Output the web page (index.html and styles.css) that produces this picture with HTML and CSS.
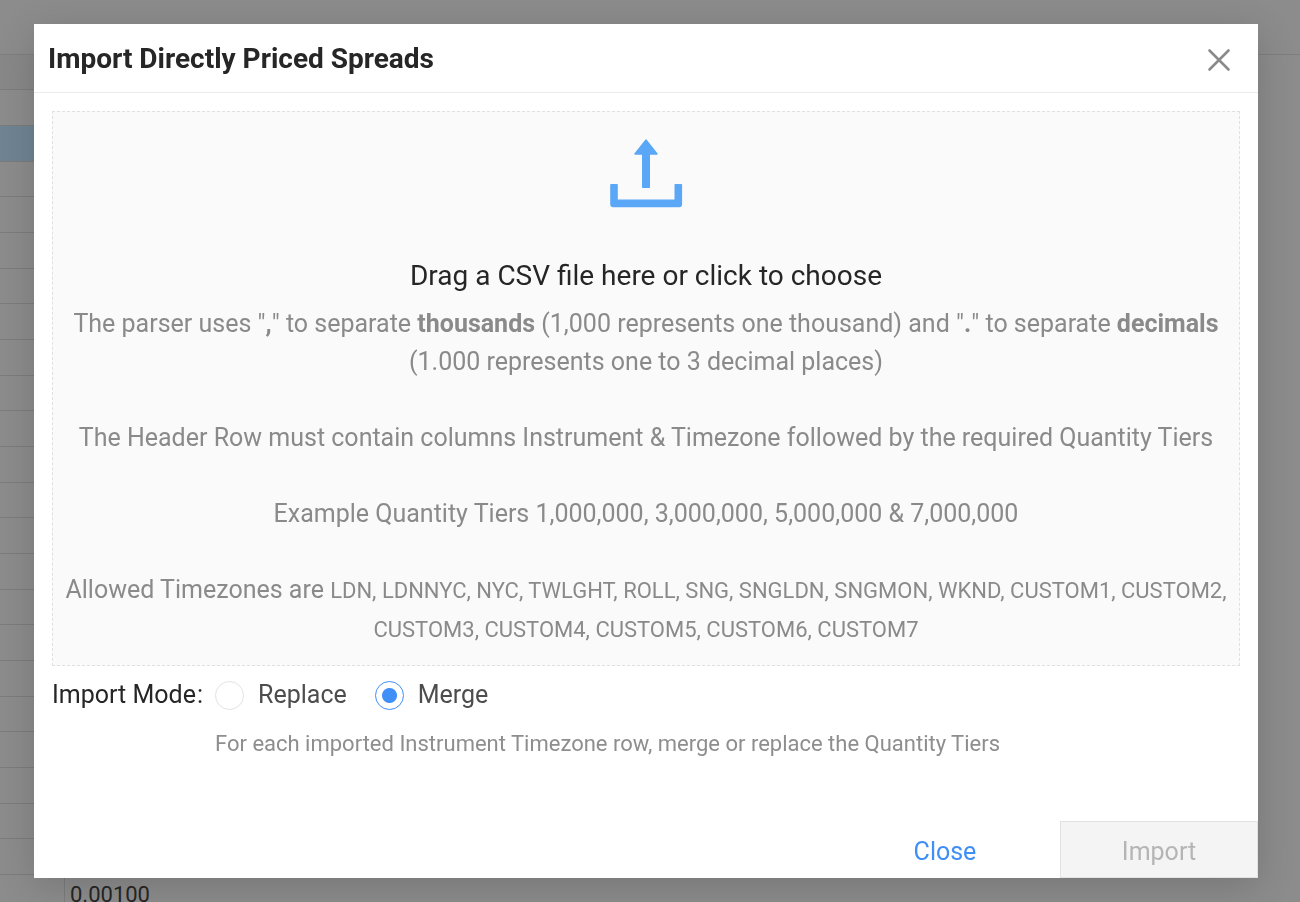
FILE: index.html
```html
<!DOCTYPE html>
<html lang="en">
<head>
    <meta charset="UTF-8">
    <meta name="viewport" content="width=device-width, initial-scale=1.0">
    <title>Import Directly Priced Spreads</title>
    <link rel="stylesheet" href="styles.css">
</head>
<body>
    <!-- Spreads grid behind the dialog -->
    <div class="page">
        <div class="toolbar"></div>
        <div class="rows">
            <div class="row head"></div>
            <div class="row"></div>
            <div class="row selected"></div>
            <div class="row"></div>
            <div class="row"></div>
            <div class="row"></div>
            <div class="row"></div>
            <div class="row"></div>
            <div class="row"></div>
            <div class="row"></div>
            <div class="row"></div>
            <div class="row"></div>
            <div class="row"></div>
            <div class="row"></div>
            <div class="row"></div>
            <div class="row"></div>
            <div class="row"></div>
            <div class="row"></div>
            <div class="row"></div>
            <div class="row"></div>
            <div class="row"></div>
            <div class="row"></div>
            <div class="row"></div>
            <div class="row"><span class="cell">0.00100</span></div>
        </div>
    </div>

    <div class="overlay">
        <div class="modal" role="dialog" aria-modal="true" aria-labelledby="modal-title">
            <div class="modal-header">
                <h1 id="modal-title">Import Directly Priced Spreads</h1>
                <button type="button" class="modal-x" aria-label="Close dialog">
                    <svg width="24" height="24" viewBox="0 0 24 24"><path d="M2.5 2.5L21.5 21.5M21.5 2.5L2.5 21.5" stroke="#8a8a8a" stroke-width="2.6" stroke-linecap="round"/></svg>
                </button>
            </div>

            <div class="modal-body">
                <button type="button" class="dropzone">
                    <svg class="upload-icon" width="74" height="70" viewBox="0 0 74 70" fill="#5ba7f7">
                        <path d="M36.3 .8a.9.9 0 0 1 1.4 0L48.6 14.4a.8.8 0 0 1-.6 1.3H41V48.2a.8.8 0 0 1-.8.8h-6.4a.8.8 0 0 1-.8-.8V15.7H26a.8.8 0 0 1-.6-1.3z"/>
                        <path d="M2 45h6a.8.8 0 0 1 .8.8V60.500H65.500V45.800a.8.8 0 0 1 .8-.8h6a.8.8 0 0 1 .8.8V65.200a3 3 0 0 1-3 3H4.200a3 3 0 0 1-3-3V45.800A.8.8 0 0 1 2 45z"/>
                    </svg>
                    <span class="drop-title">Drag a CSV file here or click to choose</span>
                    <span class="drop-hint">The parser uses "<b>,</b>" to separate <b>thousands</b> (1,000 represents one thousand) and "<b>.</b>" to separate <b>decimals</b><br>(1.000 represents one to 3 decimal places)</span>
                    <span class="drop-hint">The Header Row must contain columns Instrument &amp; Timezone followed by the required Quantity Tiers</span>
                    <span class="drop-hint">Example Quantity Tiers 1,000,000, 3,000,000, 5,000,000 &amp; 7,000,000</span>
                    <span class="drop-hint">Allowed Timezones are <span class="zones">LDN, LDNNYC, NYC, TWLGHT, ROLL, SNG, SNGLDN, SNGMON, WKND, CUSTOM1, CUSTOM2,<br>CUSTOM3, CUSTOM4, CUSTOM5, CUSTOM6, CUSTOM7</span></span>
                </button>

                <div class="mode" role="radiogroup" aria-labelledby="mode-label">
                    <span id="mode-label" class="mode-label">Import Mode<span class="colon">:</span></span>
                    <div class="options">
                        <label class="option"><input type="radio" name="mode" value="replace"> Replace</label>
                        <label class="option"><input type="radio" name="mode" value="merge" checked> Merge</label>
                    </div>
                    <p class="mode-help">For each imported Instrument Timezone row, merge or replace the Quantity Tiers</p>
                </div>
            </div>

            <div class="modal-footer">
                <button type="button" class="btn btn-link">Close</button>
                <button type="button" class="btn" disabled>Import</button>
            </div>
        </div>
    </div>
</body>
</html>
```
FILE: styles.css
```css
* {
    box-sizing: border-box;
}
body {
    margin: 0;
    font-family: Roboto, "Liberation Sans", Arial, sans-serif;
    color: #262626;
    background-color: #8c8c8c;
}
button {
    font-family: inherit;
    cursor: pointer;
}

/* page behind */
.page {
    height: 100vh;
    overflow: hidden;
}
.toolbar {
    height: 55px;
    border-bottom: 1px solid #7e7e7e;
}
.rows {
    width: 90%;
}
.row {
    height: 36px;
    border-bottom: 1px solid #7c7c7c;
    padding-left: 64px;
}
.row:nth-child(3n+1) {
    height: 35px;
}
.row.head {
    background-color: #888;
}
.row.selected {
    background-color: #6f8493;
}
.cell {
    display: inline-block;
    height: 100%;
    padding: 7px 5px 0;
    border-left: 1px solid #7c7c7c;
    font-size: 22px;
    line-height: 26px;
}

/* dialog */
.overlay {
    position: fixed;
    inset: 0;
    padding: 24px 42px 24px 34px;
    display: flex;
    align-items: stretch;
}
.modal {
    flex: 1;
    display: flex;
    flex-direction: column;
    background-color: #fff;
    box-shadow: 0 8px 36px rgba(0, 0, 0, 0.16);
}
.modal-header {
    display: flex;
    align-items: center;
    justify-content: space-between;
    height: 69px;
    padding: 2px 24px 0 14px;
    border-bottom: 1px solid #ebebeb;
}
.modal-header h1 {
    margin: 0;
    font-size: 28px;
    line-height: 40px;
}
.modal-x {
    display: flex;
    padding: 5px 3px 3px;
    border: none;
    background: none;
}
.modal-body {
    flex: 1;
    padding: 18px 18px 0;
}
.dropzone {
    display: flex;
    flex-direction: column;
    align-items: center;
    width: 100%;
    padding: 27px 8px 16px;
    border: 1px dashed #e0e0e0;
    background-color: #fafafa;
    color: #8a8a8a;
}
.upload-icon {
    margin-bottom: 46px;
}
.drop-title {
    margin-bottom: 8px;
    font-size: 28px;
    line-height: 42px;
    color: #262626;
}
.drop-hint {
    font-size: 25px;
    line-height: 38px;
}
.drop-hint + .drop-hint {
    margin-top: 38px;
}
.zones {
    font-size: 22px;
}
.mode {
    display: grid;
    grid-template-columns: 163px 1fr;
    align-items: center;
    padding-top: 10px;
}
.mode-label {
    font-size: 25px;
    line-height: 38px;
}
.colon {
    margin-left: 1px;
}
.options {
    display: flex;
    gap: 28px;
}
.option {
    display: flex;
    align-items: center;
    gap: 14px;
    font-size: 25px;
    line-height: 38px;
    color: #4d4d4d;
}
.option input {
    appearance: none;
    width: 29px;
    height: 29px;
    margin: 0;
    border: 1px solid #e3e3e3;
    border-radius: 50%;
    background-color: #fff;
}
.option input:checked {
    border-color: #3f8ff7;
    background-image: radial-gradient(circle, #3f8ff7 7px, transparent 8px);
}
.mode-help {
    grid-column: 2;
    margin: 13px 0 0;
    font-size: 22px;
    line-height: 34px;
    color: #8e8e8e;
}
.modal-footer {
    display: flex;
    justify-content: flex-end;
    gap: 16px;
}
.btn {
    width: 198px;
    height: 57px;
    padding: 3px 0 0;
    border: 1px solid #e2e2e2;
    background-color: #f4f4f4;
    font-size: 25px;
    color: #b5b5b5;
}
.btn-link {
    border-color: transparent;
    background: none;
    color: #3f8ff7;
}
```
